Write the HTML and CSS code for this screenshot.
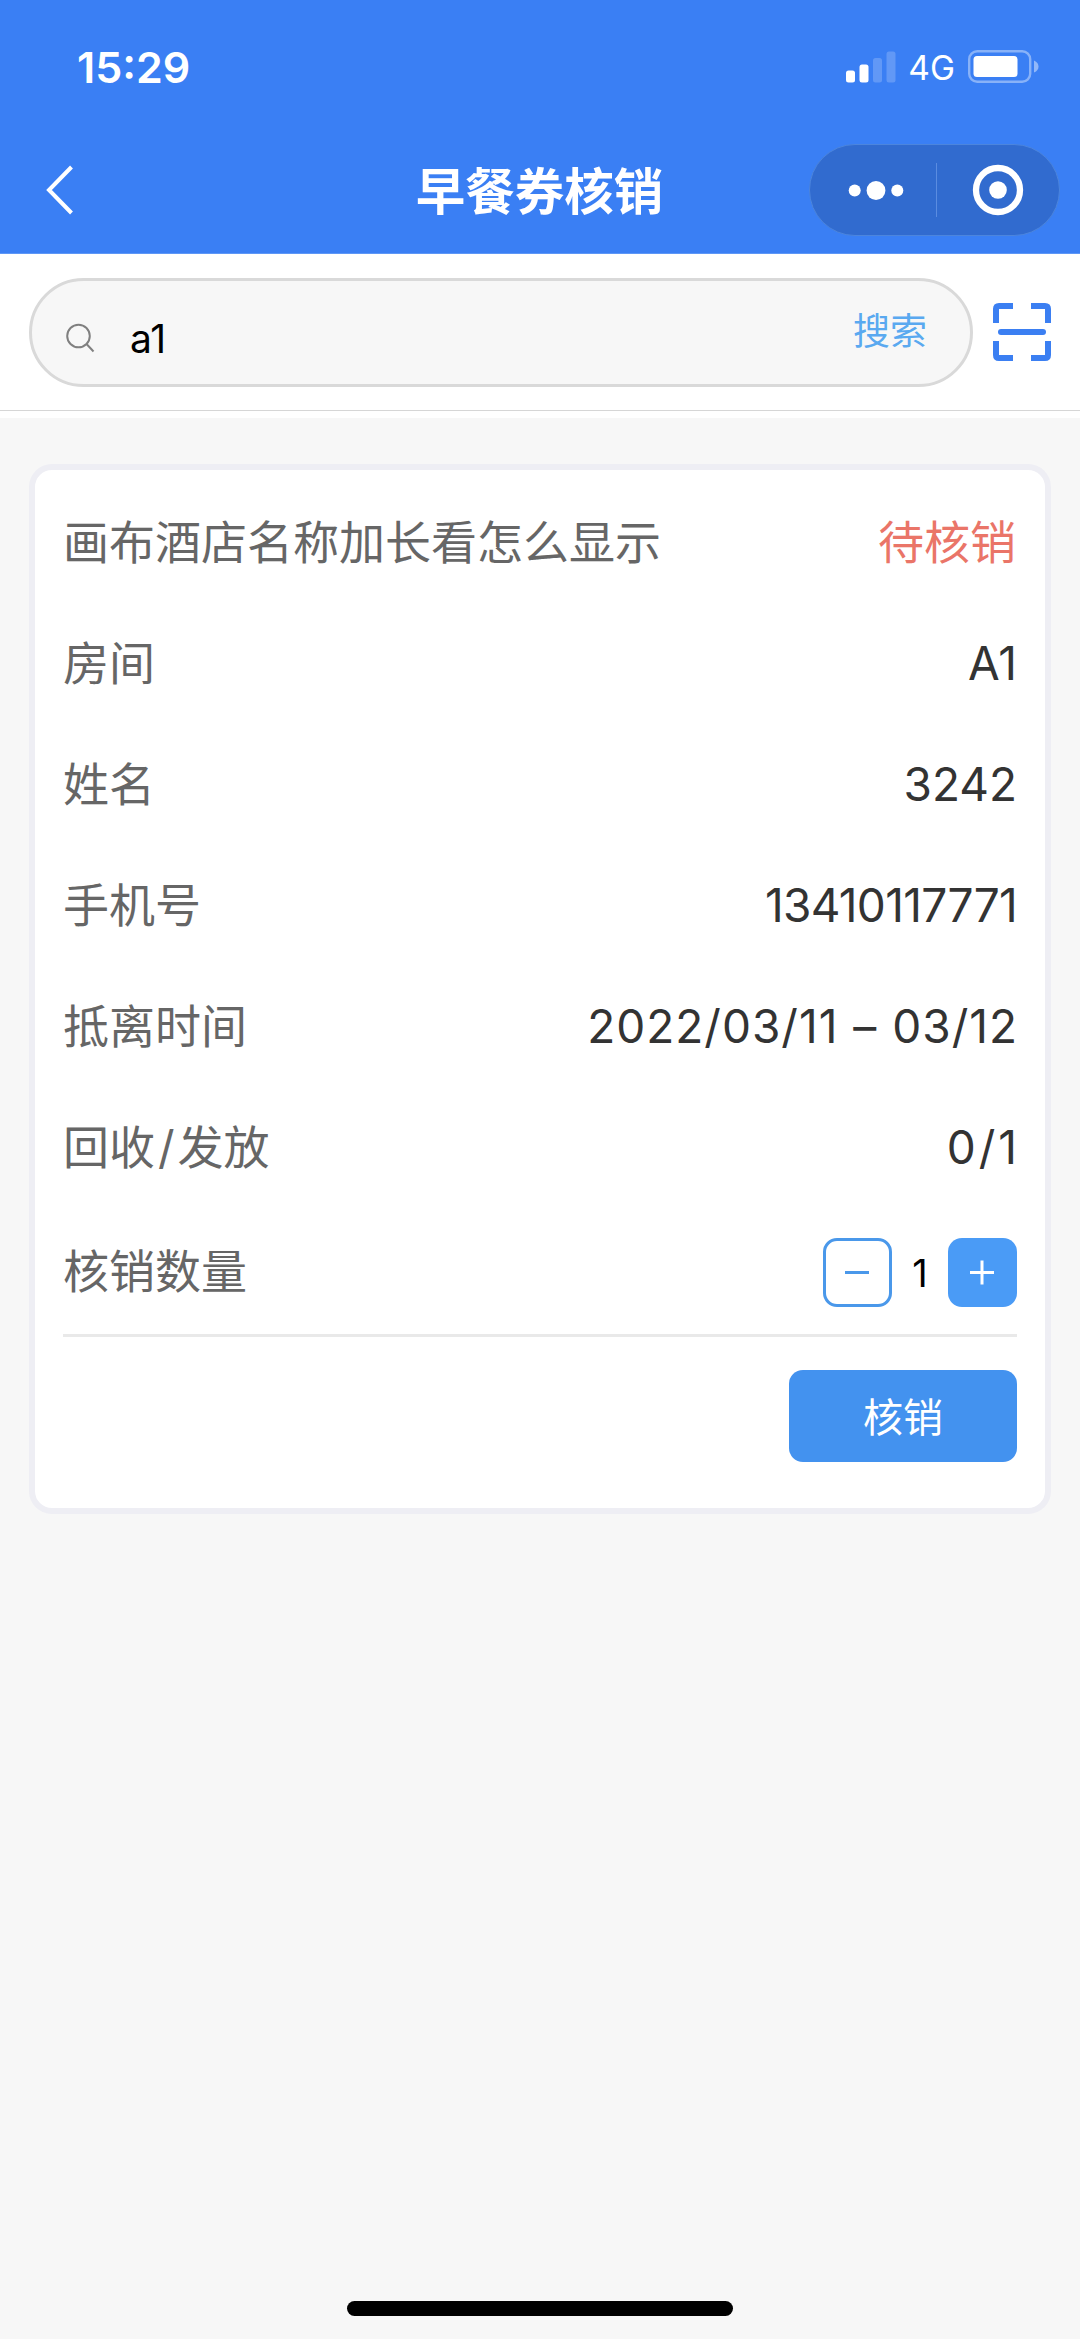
FILE: index.html
```html
<!DOCTYPE html>
<html lang="zh-CN">

<head>
    <meta charset="UTF-8">
    <meta name="viewport" content="width=device-width, initial-scale=1.0">
    <title>早餐券核销</title>
    <link rel="stylesheet" href="styles.css">
</head>

<body>

<header class="header">
    <div class="status-bar">
        <span class="time">15:29</span>
        <div class="status-icons">
            <svg class="signal" width="50" height="32" viewBox="0 0 50 32" fill="#fff">
                <rect x="0" y="19.5" width="9" height="12" rx="2.5"/>
                <rect x="13.5" y="13.5" width="9" height="18" rx="2.5"/>
                <rect x="27" y="7" width="9" height="24.5" rx="2.5" opacity="0.2"/>
                <rect x="40.5" y="0.5" width="9" height="31" rx="2.5" opacity="0.2"/>
            </svg>
            <span class="network">4G</span>
            <svg class="battery" width="71" height="33" viewBox="0 0 71 33">
                <rect x="1.2" y="1.2" width="61" height="30.6" rx="8" fill="none" stroke="#fff" stroke-opacity="0.4" stroke-width="2.4"/>
                <rect x="5.5" y="6" width="44" height="21" rx="3.5" fill="#fff"/>
                <path d="M66 10.5q4.5 2 4.5 6t-4.5 6z" fill="#fff" fill-opacity="0.45"/>
            </svg>
        </div>
    </div>
    <div class="nav-bar">
        <svg class="back" width="28" height="50" viewBox="0 0 28 50" fill="none" stroke="#fff" stroke-width="4">
            <path d="M25.5 2L3 25l22.5 23"/>
        </svg>
        <h1 class="title">早餐券核销</h1>
        <div class="capsule">
            <svg width="54" height="20" viewBox="0 0 54 20" fill="#fff">
                <circle cx="5.7" cy="10.5" r="6"/>
                <circle cx="27" cy="10.5" r="9.4"/>
                <circle cx="48.3" cy="10.5" r="6"/>
            </svg>
            <span class="capsule-line"></span>
            <svg width="52" height="52" viewBox="0 0 52 52">
                <circle cx="26" cy="26" r="22" fill="none" stroke="#fff" stroke-width="6.3"/>
                <circle cx="26" cy="26" r="8.8" fill="#fff"/>
            </svg>
        </div>
    </div>
</header>

<div class="search-bar">
    <div class="search-box">
        <svg class="search-icon" width="29" height="30" viewBox="0 0 29 30" fill="none" stroke="#808080" stroke-width="2">
            <circle cx="12.5" cy="13" r="11.3"/>
            <path d="M20.5 21l7 7.5"/>
        </svg>
        <span class="search-text">a1</span>
        <span class="search-btn">搜索</span>
    </div>
    <svg class="scan" width="58" height="58" viewBox="0 0 58 58" fill="none" stroke="#3b7ff2" stroke-width="6">
        <path d="M20 3H6Q3 3 3 6v14M38 3h14q3 0 3 3v14M3 38v14q0 3 3 3h14M55 38v14q0 3-3 3H38"/>
        <path d="M8 29h42" stroke-linecap="round"/>
    </svg>
</div>

<div class="card">
    <div class="row">
        <span class="label">画布酒店名称加长看怎么显示</span>
        <span class="state">待核销</span>
    </div>
    <div class="row">
        <span class="label">房间</span>
        <span class="value">A1</span>
    </div>
    <div class="row">
        <span class="label">姓名</span>
        <span class="value">3242</span>
    </div>
    <div class="row">
        <span class="label">手机号</span>
        <span class="value phone">13410117771</span>
    </div>
    <div class="row">
        <span class="label">抵离时间</span>
        <span class="value date">2022/03/11 – 03/12</span>
    </div>
    <div class="row">
        <span class="label">回收<span class="slash">/</span>发放</span>
        <span class="value">0<span class="slash">/</span>1</span>
    </div>
    <div class="row row-count">
        <span class="label">核销数量</span>
        <div class="stepper">
            <span class="step minus">
                <svg width="25" height="25" viewBox="0 0 25 25" stroke="#4a98ea" stroke-width="3"><path d="M0 12.5h24"/></svg>
            </span>
            <span class="count">1</span>
            <span class="step plus">
                <svg width="25" height="25" viewBox="0 0 25 25" stroke="#fff" stroke-width="3"><path d="M0 12.5h24M12 0.5v24"/></svg>
            </span>
        </div>
    </div>
    <div class="card-footer">
        <button class="submit">核销</button>
    </div>
</div>

<div class="home-bar"></div>

</body>
</html>
```
FILE: styles.css
```css
* {
    box-sizing: border-box;
}

body {
    margin: 0;
    height: 2339px;
    display: flex;
    flex-direction: column;
    background-color: #f7f7f7;
    font-family: Inter, "Noto Sans CJK SC", sans-serif;
    color: #333;
}

svg {
    display: block;
    flex-shrink: 0;
    overflow: visible;
}

.header {
    height: 254px;
    background-color: #3a7ff4;
    border-bottom: 1px solid #5e97f6;
    color: #fff;
}

.status-bar {
    height: 133px;
    display: flex;
    align-items: center;
    justify-content: space-between;
    padding: 0 41px 0 77px;
}

.time {
    font-size: 43px;
    font-weight: 600;
}

.status-icons {
    display: flex;
    align-items: center;
}

.network {
    margin: 3px 13px 0 12px;
    font-size: 33.5px;
}

.nav-bar {
    height: 114px;
    display: grid;
    grid-template-columns: 1fr auto 1fr;
    align-items: center;
    padding: 0 20px 0 46px;
}

.title {
    margin: 3px 0 0 -27px;
    font-size: 49.5px;
    font-weight: 600;
    line-height: 60px;
}

.capsule {
    justify-self: end;
    width: 251px;
    height: 92px;
    display: flex;
    align-items: center;
    justify-content: space-between;
    padding: 0 35px 0 39px;
    border: 1px solid #4c85dd;
    border-radius: 46px;
    background-color: #316bcf;
}

.capsule-line {
    width: 1px;
    height: 54px;
    margin-right: 3px;
    background-color: #5b8ce0;
}

.search-bar {
    height: 164px;
    display: flex;
    align-items: center;
    padding: 0 29px 8px;
    background: linear-gradient(#d6d6d6, #d6d6d6) 0 156px / 100% 1px no-repeat #fff;
    gap: 20px;
}

.search-box {
    flex: 1;
    height: 109px;
    margin-top: 1px;
    display: flex;
    align-items: center;
    padding: 0 43px 0 34px;
    border: 3px solid #d9d9d9;
    border-radius: 55px;
    background-color: #f7f7f7;
}

.search-icon {
    margin-top: 11px;
}

.search-text {
    flex: 1;
    margin: 11px 0 0 35px;
    font-size: 39px;
    color: #000;
}

.search-btn {
    font-size: 37px;
    line-height: 50px;
    color: #5aa9f0;
    margin-top: -2px;
}

.card {
    height: 1050px;
    margin: 46px 29px 0;
    padding: 11px 28px 0;
    border: 6px solid #eeeef4;
    border-radius: 23px;
    background-color: #fff;
}

.row {
    height: 121px;
    display: flex;
    align-items: center;
    justify-content: space-between;
    font-size: 46px;
    line-height: 60px;
}

.label {
    color: #666;
}

.state {
    margin-right: 1px;
    color: #ea7568;
}

.phone {
    letter-spacing: -0.7px;
}

.date {
    margin-right: -1px;
    letter-spacing: 1px;
    word-spacing: 1px;
}

.slash {
    margin: 0 3px;
}

.row-count {
    height: 130px;
    border-bottom: 3px solid #e9e9e9;
}

.stepper {
    display: flex;
    align-items: center;
    margin-top: 4px;
}

.step {
    width: 69px;
    height: 69px;
    display: flex;
    align-items: center;
    justify-content: center;
    border-radius: 14px;
}

.minus {
    border: 3px solid #4a98ea;
}

.plus {
    background-color: #4a9bf6;
}

.count {
    width: 56px;
    text-align: center;
    font-size: 38px;
    color: #000;
}

.card-footer {
    display: flex;
    justify-content: flex-end;
    padding-top: 33px;
}

.submit {
    width: 228px;
    height: 92px;
    padding: 0 0 3px;
    border: none;
    border-radius: 14px;
    background-color: #4392ef;
    font-family: inherit;
    font-size: 40px;
    color: #fff;
}

.home-bar {
    width: 386px;
    height: 15px;
    margin: auto auto 23px;
    border-radius: 8px;
    background-color: #000;
}
```
